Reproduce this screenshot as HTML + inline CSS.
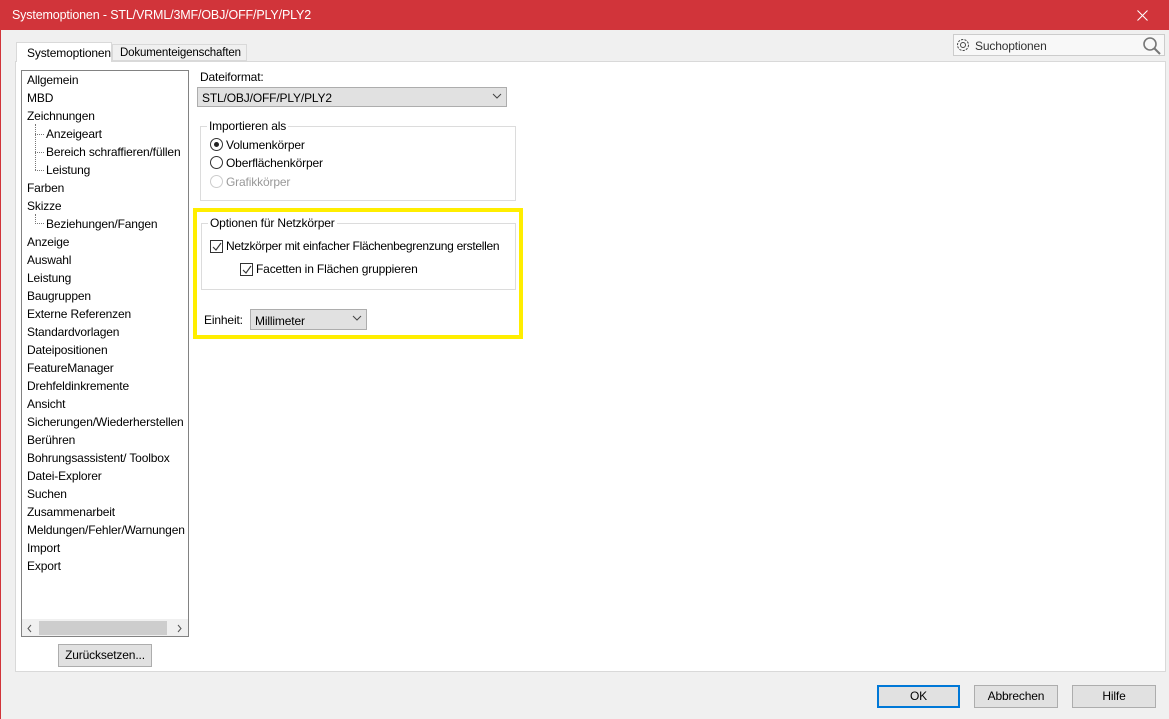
<!DOCTYPE html>
<html><head><meta charset="utf-8"><style>
*{box-sizing:border-box;margin:0;padding:0}
body{width:1169px;height:719px;background:#f0f0f0;font-family:"Liberation Sans",sans-serif;font-size:12px;color:#000;position:relative;overflow:hidden;letter-spacing:-0.15px}
.a{position:absolute}
.title{left:0;top:0;width:1169px;height:30px;background:#d1343a;color:#fff;font-size:12.5px;padding:8px 0 0 12px}
.panel{left:15px;top:61px;width:1151px;height:611px;background:#fff;border:1px solid #d9d9d9}
.list{left:21px;top:70px;width:168px;height:567px;border:1px solid #828282;background:#fff;overflow:hidden}
.it{position:absolute;white-space:nowrap;font-size:12px}
.btn{position:absolute;background:#e1e1e1;border:1px solid #adadad;text-align:center;font-size:12px;line-height:20px}
.grp{position:absolute;border:1px solid #dcdcdc}
.leg{position:absolute;background:#fff;padding:0 2px;font-size:12px}
.rb{position:absolute;width:13px;height:13px;border:1px solid #333;border-radius:50%}
.cb{position:absolute;width:13px;height:13px;border:1px solid #333;background:#fff}
</style></head><body>
<div class="a" style="left:0;top:0;width:1px;height:719px;background:#d1343a"></div>
<div class="a title">Systemoptionen - STL/VRML/3MF/OBJ/OFF/PLY/PLY2</div>
<svg class="a" style="left:1137px;top:10px" width="11" height="11"><path d="M0.5 0.5L10.5 10.5M10.5 0.5L0.5 10.5" stroke="#fff" stroke-width="1"/></svg>
<div class="a panel"></div>
<div class="a" style="left:16px;top:42px;width:96px;height:20px;background:#fff;border:1px solid #d9d9d9;border-bottom:none;padding:3px 0 0 10px;font-size:12px">Systemoptionen</div>
<div class="a" style="left:112px;top:44px;width:135px;height:17px;background:#f0f0f0;border:1px solid #d9d9d9;padding:2px 0 0 7px;font-size:11.5px">Dokumenteigenschaften</div>
<div class="a" style="left:953px;top:34px;width:212px;height:22px;background:#f8f8f8;border:1px solid #ccc"></div>
<svg class="a" style="left:955px;top:37px" width="16" height="16"><circle cx="8" cy="8" r="2.5" fill="none" stroke="#444"/><circle cx="8" cy="8" r="5.5" fill="none" stroke="#444" stroke-dasharray="2.2 1.2"/></svg>
<div class="a" style="left:975px;top:39px;color:#333">Suchoptionen</div>
<svg class="a" style="left:1142px;top:36px" width="20" height="20"><circle cx="8" cy="8" r="6" fill="none" stroke="#777" stroke-width="1.6"/><path d="M12.5 12.5L18 18" stroke="#777" stroke-width="2"/></svg>
<div class="a list">
<div class="it" style="left:5px;top:2px">Allgemein</div>
<div class="it" style="left:5px;top:20px">MBD</div>
<div class="it" style="left:5px;top:38px">Zeichnungen</div>
<div class="it" style="left:24px;top:56px">Anzeigeart</div>
<div class="it" style="left:24px;top:74px">Bereich schraffieren/füllen</div>
<div class="it" style="left:24px;top:92px">Leistung</div>
<div class="a" style="left:13px;top:53px;width:9px;height:46px;border-left:1px dotted #777"></div>
<div class="a" style="left:13px;top:63px;width:9px;border-top:1px dotted #777"></div>
<div class="a" style="left:13px;top:81px;width:9px;border-top:1px dotted #777"></div>
<div class="a" style="left:13px;top:99px;width:9px;border-top:1px dotted #777"></div>
<div class="it" style="left:5px;top:110px">Farben</div>
<div class="it" style="left:5px;top:128px">Skizze</div>
<div class="it" style="left:24px;top:146px">Beziehungen/Fangen</div>
<div class="a" style="left:13px;top:143px;width:9px;height:10px;border-left:1px dotted #777;border-bottom:1px dotted #777"></div>
<div class="it" style="left:5px;top:164px">Anzeige</div>
<div class="it" style="left:5px;top:182px">Auswahl</div>
<div class="it" style="left:5px;top:200px">Leistung</div>
<div class="it" style="left:5px;top:218px">Baugruppen</div>
<div class="it" style="left:5px;top:236px">Externe Referenzen</div>
<div class="it" style="left:5px;top:254px">Standardvorlagen</div>
<div class="it" style="left:5px;top:272px">Dateipositionen</div>
<div class="it" style="left:5px;top:290px">FeatureManager</div>
<div class="it" style="left:5px;top:308px">Drehfeldinkremente</div>
<div class="it" style="left:5px;top:326px">Ansicht</div>
<div class="it" style="left:5px;top:344px">Sicherungen/Wiederherstellen</div>
<div class="it" style="left:5px;top:362px">Berühren</div>
<div class="it" style="left:5px;top:380px">Bohrungsassistent/ Toolbox</div>
<div class="it" style="left:5px;top:398px">Datei-Explorer</div>
<div class="it" style="left:5px;top:416px">Suchen</div>
<div class="it" style="left:5px;top:434px">Zusammenarbeit</div>
<div class="it" style="left:5px;top:452px">Meldungen/Fehler/Warnungen</div>
<div class="it" style="left:5px;top:470px">Import</div>
<div class="it" style="left:5px;top:488px">Export</div>
<div class="a" style="left:0;top:548px;width:166px;height:17px;background:#f0f0f0"></div>
<div class="a" style="left:17px;top:550px;width:128px;height:14px;background:#cdcdcd"></div>
<svg class="a" style="left:4px;top:553px" width="8" height="9"><path d="M5 1L2 4.5L5 8" fill="none" stroke="#555"/></svg>
<svg class="a" style="left:154px;top:553px" width="8" height="9"><path d="M2 1L5 4.5L2 8" fill="none" stroke="#555"/></svg>
</div>
<div class="btn" style="left:58px;top:644px;width:94px;height:23px">Zurücksetzen...</div>
<div class="a" style="left:200px;top:70px">Dateiformat:</div>
<div class="a" style="left:197px;top:87px;width:310px;height:20px;background:#e1e1e1;border:1px solid #adadad;padding:3px 0 0 4px">STL/OBJ/OFF/PLY/PLY2</div>
<svg class="a" style="left:492px;top:93px" width="10" height="7"><path d="M1 1L5 5L9 1" fill="none" stroke="#444"/></svg>
<div class="grp" style="left:200px;top:126px;width:316px;height:75px"></div>
<div class="leg" style="left:207px;top:119px">Importieren als</div>
<div class="rb" style="left:210px;top:138px"><div class="a" style="left:3px;top:3px;width:5px;height:5px;border-radius:50%;background:#222"></div></div>
<div class="a" style="left:226px;top:138px">Volumenkörper</div>
<div class="rb" style="left:210px;top:156px"></div>
<div class="a" style="left:226px;top:156px">Oberflächenkörper</div>
<div class="rb" style="left:210px;top:175px;border-color:#ccc"></div>
<div class="a" style="left:226px;top:175px;color:#999">Grafikkörper</div>
<div class="a" style="left:193px;top:208px;width:330px;height:131px;border:4px solid #ffee00"></div>
<div class="grp" style="left:201px;top:223px;width:315px;height:67px"></div>
<div class="leg" style="left:208px;top:216px">Optionen für Netzkörper</div>
<div class="cb" style="left:210px;top:240px"></div>
<svg class="a" style="left:211px;top:241px" width="12" height="12"><path d="M2 6L5 9L10 2" fill="none" stroke="#333" stroke-width="1.1"/></svg>
<div class="a" style="left:226px;top:239px;letter-spacing:-0.3px">Netzkörper mit einfacher Flächenbegrenzung erstellen</div>
<div class="cb" style="left:240px;top:263px"></div>
<svg class="a" style="left:241px;top:264px" width="12" height="12"><path d="M2 6L5 9L10 2" fill="none" stroke="#333" stroke-width="1.1"/></svg>
<div class="a" style="left:256px;top:262px">Facetten in Flächen gruppieren</div>
<div class="a" style="left:204px;top:313px">Einheit:</div>
<div class="a" style="left:250px;top:309px;width:117px;height:21px;background:#e1e1e1;border:1px solid #adadad;padding:4px 0 0 4px">Millimeter</div>
<svg class="a" style="left:352px;top:315px" width="10" height="7"><path d="M1 1L5 5L9 1" fill="none" stroke="#444"/></svg>
<div class="btn" style="left:877px;top:685px;width:83px;height:23px;border:2px solid #0078d7;line-height:19px">OK</div>
<div class="btn" style="left:974px;top:685px;width:84px;height:23px">Abbrechen</div>
<div class="btn" style="left:1072px;top:685px;width:84px;height:23px">Hilfe</div>
</body></html>
